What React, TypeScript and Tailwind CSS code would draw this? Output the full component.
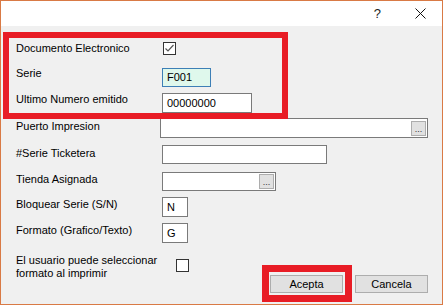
import React from "react";

const font = { fontFamily: '"Liberation Sans", Arial, sans-serif' };

const Field = ({
  w,
  h = 20,
  value,
  highlight,
  browse,
}: {
  w: string;
  h?: number;
  value?: string;
  highlight?: boolean;
  browse?: boolean;
}) => (
  <div
    className={`${w} ${h === 19 ? "h-[19px]" : "h-[20px]"} flex items-center justify-between border ${
      highlight ? "border-[#3d7fb6] bg-[#dff8ec]" : "border-[#7a7a7a] bg-white"
    } pl-[4px] pr-[1px]`}
  >
    <span className="leading-[13px]">{value}</span>
    {browse && <Dots />}
  </div>
);

const Dots = () => (
  <div className="w-[15px] h-[15px] border border-[#adadad] bg-[#e1e1e1] flex items-end justify-center text-[9px] leading-[11px] text-[#333]">
    ...
  </div>
);

const Check = ({ checked }: { checked?: boolean }) => (
  <div className="w-[13px] h-[13px] border border-[#333] bg-white flex items-center justify-center">
    {checked && (
      <svg width="11" height="11" viewBox="0 0 11 11">
        <polyline
          points="1.5,5.5 4,8 9.5,2"
          fill="none"
          stroke="#555"
          strokeWidth="1.2"
        />
      </svg>
    )}
  </div>
);

const Row = ({
  label,
  mt,
  lt,
  children,
}: {
  label: string;
  mt: string;
  lt: string;
  children: React.ReactNode;
}) => (
  <div className={`flex items-start ${mt}`}>
    <div className={`w-[146px] leading-[13px] ${lt}`}>{label}</div>
    {children}
  </div>
);

export default function App() {
  return (
    <div className="w-[445px] h-[306px] bg-white text-[11px] text-black" style={font}>
      <div className="relative w-[443px] h-[305px] border border-[#d97a45] bg-[#f0f0f0] flex flex-col">
        <div className="h-[25px] bg-white flex items-center justify-end shrink-0">
          <span className="text-[13px] text-[#222] mr-[34px]">?</span>
          <svg width="11" height="11" viewBox="0 0 11 11" className="mr-[16px]">
            <path d="M0.5 0.5 L10.5 10.5 M10.5 0.5 L0.5 10.5" stroke="#111" strokeWidth="1" />
          </svg>
        </div>

        <div className="flex flex-col pl-[15px] pr-[14px]">
          <Row label="Documento Electronico" mt="mt-[16px]" lt="mt-0">
            <div className="ml-[1px]">
              <Check checked />
            </div>
          </Row>
          <Row label="Serie" mt="mt-[13px]" lt="-mt-[1px]">
            <Field w="w-[49px]" h={19} value="F001" highlight />
          </Row>
          <Row label="Ultimo Numero emitido" mt="mt-[6px]" lt="mt-0">
            <Field w="w-[90px]" value="00000000" />
          </Row>
          <Row label="Puerto Impresion" mt="mt-[5px]" lt="mt-[2px]">
            <Field w="w-[273px]" browse />
          </Row>
          <Row label="#Serie Ticketera" mt="mt-[7px]" lt="mt-[2px]">
            <Field w="w-[165px]" h={19} />
          </Row>
          <Row label="Tienda Asignada" mt="mt-[8px]" lt="mt-[1px]">
            <Field w="w-[114px]" h={19} browse />
          </Row>
          <Row label="Bloquear Serie (S/N)" mt="mt-[6px]" lt="mt-[1px]">
            <Field w="w-[26px]" value="N" />
          </Row>
          <Row label="Formato (Grafico/Texto)" mt="mt-[6px]" lt="mt-[1px]">
            <Field w="w-[26px]" value="G" />
          </Row>
          <div className="flex items-start mt-[11px]">
            <div className="w-[160px] leading-[13px]">
              El usuario puede seleccionar
              <br />
              formato al imprimir
            </div>
            <div className="mt-[5px]">
              <Check />
            </div>
            <div className="ml-auto mt-[21px] flex gap-[12px]">
              <button className="w-[73px] h-[18px] border border-[#adadad] bg-[#e1e1e1] leading-[14px]">
                Acepta
              </button>
              <button className="w-[73px] h-[18px] border border-[#adadad] bg-[#e1e1e1] leading-[14px]">
                Cancela
              </button>
            </div>
          </div>
        </div>

        <div className="absolute left-[2px] top-[31px] w-[285px] h-[87px] border-[6px] border-[#e81c25]" />
        <div className="absolute left-[261px] top-[264px] w-[90px] h-[37px] border-[7px] border-[#e81c25]" />
      </div>
    </div>
  );
}
